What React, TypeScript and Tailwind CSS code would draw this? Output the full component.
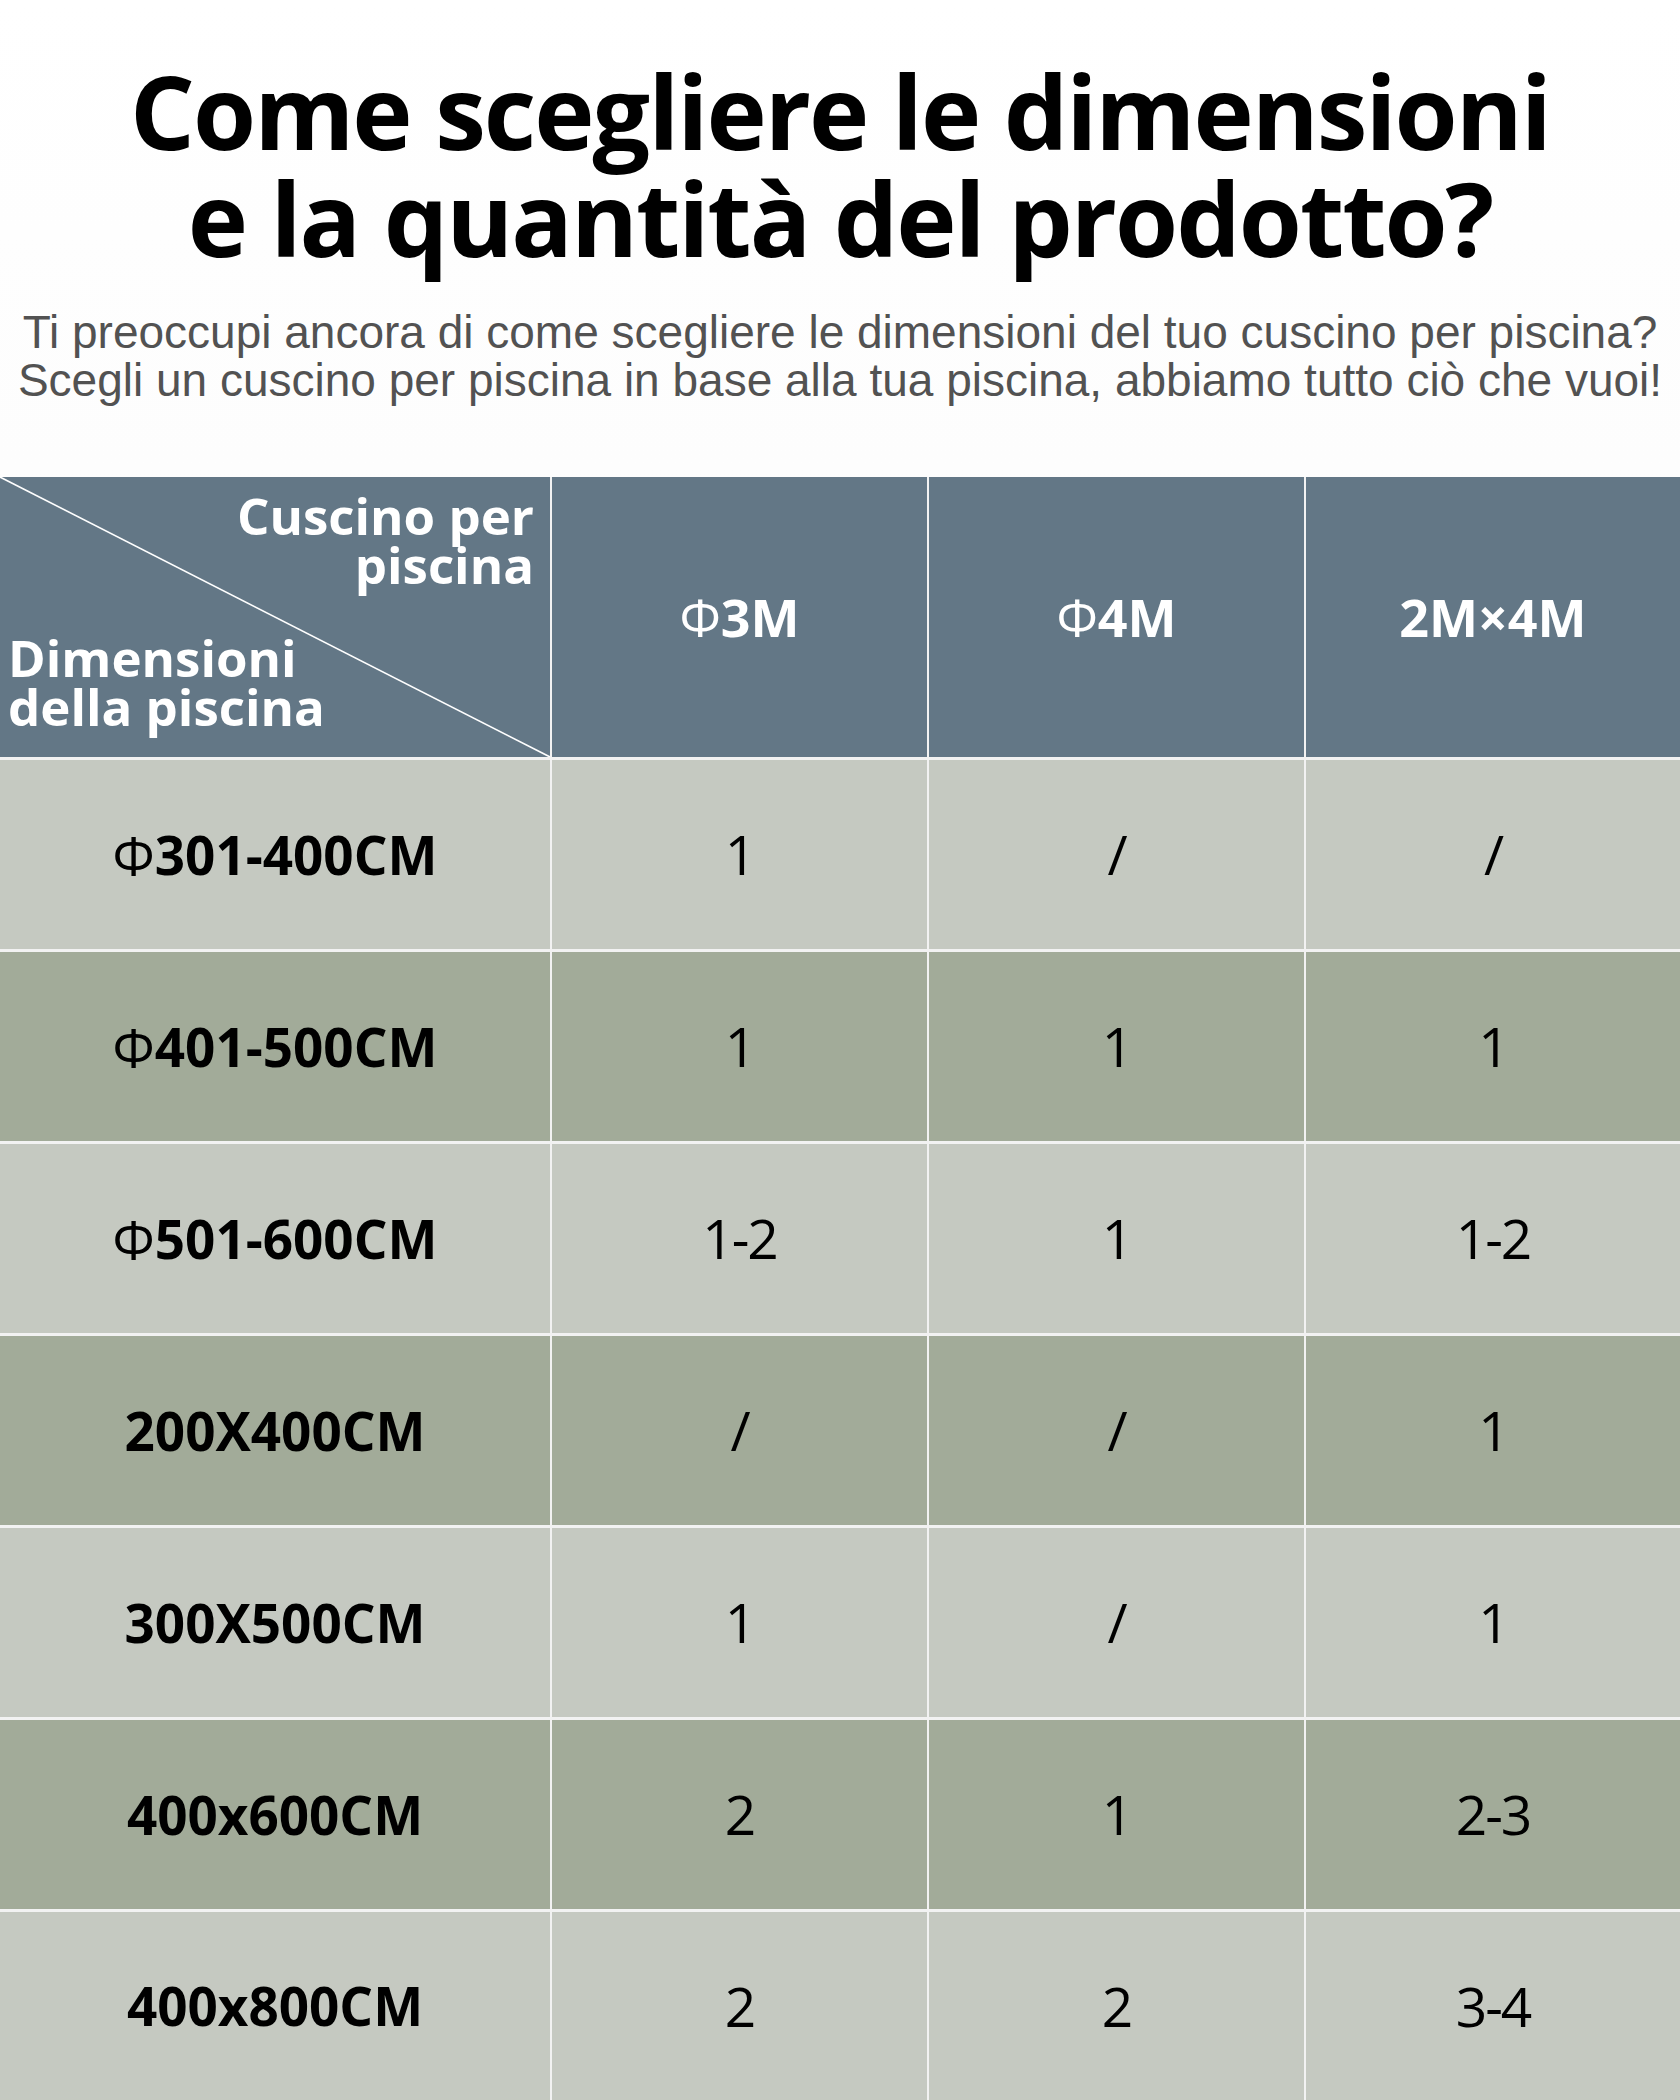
import React from "react";

const rows: { label: React.ReactNode; vals: string[]; dark: boolean }[] = [
  { label: <><span className="font-normal">Φ</span>301-400CM</>, vals: ["1", "/", "/"], dark: false },
  { label: <><span className="font-normal">Φ</span>401-500CM</>, vals: ["1", "1", "1"], dark: true },
  { label: <><span className="font-normal">Φ</span>501-600CM</>, vals: ["1-2", "1", "1-2"], dark: false },
  { label: <>200X400CM</>, vals: ["/", "/", "1"], dark: true },
  { label: <>300X500CM</>, vals: ["1", "/", "1"], dark: false },
  { label: <>400x600CM</>, vals: ["2", "1", "2-3"], dark: true },
  { label: <>400x800CM</>, vals: ["2", "2", "3-4"], dark: false },
];

export default function App() {
  return (
    <div className="w-[1680px] h-[2100px] overflow-hidden bg-gradient-to-b from-white to-[#f6f6f6] font-['Open_Sans',sans-serif]">
      <div className="h-[477px] flex flex-col items-center">
        <h1 className="mt-[57px] text-center text-[102px] leading-[107px] font-bold text-black tracking-[-2px]">
          Come scegliere le dimensioni
          <br />e la quantità del prodotto?
        </h1>
        <p className="mt-[37px] text-center text-[46px] leading-[48px] text-[#525252] font-['Liberation_Sans',Arial,sans-serif] whitespace-nowrap">
          Ti preoccupi ancora di come scegliere le dimensioni del tuo cuscino per piscina?
          <br />
          Scegli un cuscino per piscina in base alla tua piscina, abbiamo tutto ciò che vuoi!
        </p>
      </div>

      <div className="grid grid-cols-[550px_375px_375px_1fr] gap-x-[2px] gap-y-[3px] bg-[#f2f2f2]">
        {/* header */}
        <div className="relative h-[280px] bg-[#637786] text-white font-bold text-[51px] leading-[49px]">
          <svg className="absolute inset-0 w-full h-full" viewBox="0 0 550 280" preserveAspectRatio="none">
            <line x1="0" y1="0" x2="550" y2="280" stroke="#ffffff" strokeWidth="1.6" />
          </svg>
          <div className="absolute right-[16px] top-[14px] text-right">
            Cuscino per
            <br />
            piscina
          </div>
          <div className="absolute left-[8px] top-[156px] text-left">
            Dimensioni
            <br />
            della piscina
          </div>
        </div>
        <div className="h-[280px] bg-[#637786] flex items-center justify-center text-white font-bold text-[52px]">
          <span><span className="font-normal">Φ</span>3M</span>
        </div>
        <div className="h-[280px] bg-[#637786] flex items-center justify-center text-white font-bold text-[52px]">
          <span><span className="font-normal">Φ</span>4M</span>
        </div>
        <div className="h-[280px] bg-[#637786] flex items-center justify-center text-white font-bold text-[52px]">
          <span>2M×4M</span>
        </div>

        {rows.map((r, i) => {
          const bg = r.dark ? "bg-[#a2ab99]" : "bg-[#c5c9c1]";
          const h = i === rows.length - 1 ? "h-[188px]" : "h-[189px]";
          return (
            <React.Fragment key={i}>
              <div className={`${h} ${bg} flex items-center justify-center text-black font-bold text-[53px]`}>
                <span>{r.label}</span>
              </div>
              {r.vals.map((v, j) => (
                <div key={j} className={`${h} ${bg} flex items-center justify-center text-black font-normal text-[55px] tracking-[-2px]`}>
                  <span>{v}</span>
                </div>
              ))}
            </React.Fragment>
          );
        })}
      </div>
    </div>
  );
}
